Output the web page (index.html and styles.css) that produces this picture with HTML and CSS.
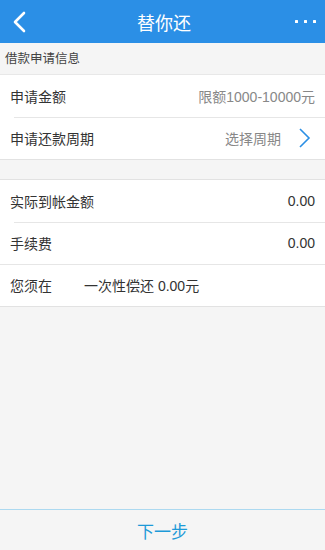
FILE: index.html
```html
<!DOCTYPE html>
<html lang="zh-CN">
<head>
    <meta charset="UTF-8">
    <meta name="viewport" content="width=device-width, initial-scale=1.0">
    <title>替你还</title>
    <link rel="stylesheet" href="styles.css">
</head>
<body>
    <div class="page">
        <header class="topbar">
            <span class="back">
                <svg width="16" height="22" viewBox="0 0 16 22">
                    <polyline points="12,2 3,11 12,20" fill="none" stroke="#fff" stroke-width="2.6" stroke-linecap="round" stroke-linejoin="round"/>
                </svg>
            </span>
            <h1 class="title">替你还</h1>
            <span class="more">
                <i></i><i></i><i></i>
            </span>
        </header>

        <main class="content">
            <div class="section-label">借款申请信息</div>
            <div class="card">
                <div class="row">
                    <span class="row-label">申请金额</span>
                    <span class="row-hint">限额1000-10000元</span>
                </div>
                <div class="row">
                    <span class="row-label">申请还款周期</span>
                    <span class="row-hint period">选择周期
                        <svg width="14" height="22" viewBox="0 0 14 22">
                            <polyline points="2,2 11,11 2,20" fill="none" stroke="#2b8fe4" stroke-width="1.6" stroke-linejoin="miter"/>
                        </svg>
                    </span>
                </div>
            </div>

            <div class="card second">
                <div class="row">
                    <span class="row-label">实际到帐金额</span>
                    <span class="row-value">0.00</span>
                </div>
                <div class="row full-line">
                    <span class="row-label">手续费</span>
                    <span class="row-value">0.00</span>
                </div>
                <div class="row">
                    <span class="row-label due">您须在</span>
                    <span class="row-label">一次性偿还 0.00元</span>
                </div>
            </div>
        </main>

        <footer class="bottom">
            <button class="next">下一步</button>
        </footer>
    </div>
</body>
</html>
```

FILE: styles.css
```css
* {
    box-sizing: border-box;
}

html, body {
    margin: 0;
    padding: 0;
    height: 100%;
}

body {
    font-family: "Liberation Sans", "Noto Sans CJK SC", sans-serif;
    background-color: #f5f5f5;
    color: #333;
}

.page {
    display: flex;
    flex-direction: column;
    height: 100vh;
}

.topbar {
    height: 43px;
    background-color: #2b8fe6;
    display: flex;
    align-items: center;
    justify-content: space-between;
    padding: 0 9px 0 12px;
}

.back {
    display: flex;
    width: 40px;
}

.title {
    margin: 0;
    font-size: 18px;
    font-weight: normal;
    color: #fff;
}

.more {
    display: flex;
    gap: 6px;
    width: 40px;
    justify-content: flex-end;
}

.more i {
    width: 3px;
    height: 3px;
    border-radius: 0.5px;
    background-color: #fff;
}

.content {
    flex: 1;
}

.section-label {
    height: 32px;
    line-height: 32px;
    padding-left: 5px;
    font-size: 12.5px;
    color: #444;
    border-bottom: 1px solid #e8e8e8;
}

.card {
    background-color: #fff;
    border-bottom: 1px solid #e2e2e2;
}

.card.second {
    margin-top: 19px;
    border-top: 1px solid #e2e2e2;
}

.row {
    height: 42px;
    display: flex;
    align-items: center;
    justify-content: space-between;
    padding: 0 10px;
    font-size: 14px;
    position: relative;
}

/* separator line, indented from the left */
.row + .row::before {
    content: "";
    position: absolute;
    top: 0;
    left: 14px;
    right: 0;
    border-top: 1px solid #e6e6e6;
}

.row.full-line + .row::before {
    left: 0;
}

.row-label {
    color: #333;
}

.row-label.due {
    width: 74px;
}

.row .row-label + .row-label {
    margin-right: auto;
}

.row-hint {
    color: #888;
}

.period {
    display: flex;
    align-items: center;
    gap: 17px;
    margin-right: 3px;
}

.row-value {
    color: #333;
}

.bottom {
    height: 41px;
    border-top: 1px solid #acd9f0;
    display: flex;
    align-items: center;
    justify-content: center;
}

.next {
    background: none;
    border: none;
    font-family: inherit;
    font-size: 17px;
    color: #1d9ad8;
    padding: 0;
    cursor: pointer;
}
```
